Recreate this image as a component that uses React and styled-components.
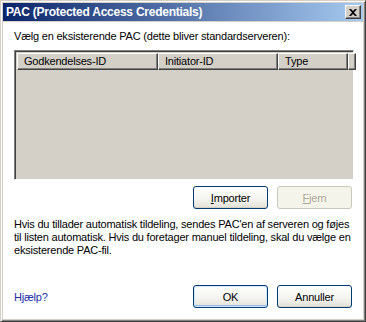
import React from "react";
import styled, { createGlobalStyle } from "styled-components";

const Global = createGlobalStyle`
  html, body { margin: 0; padding: 0; background: #fff; }
  body {
    font-family: Tahoma, "Liberation Sans", "DejaVu Sans", sans-serif;
    font-size: 11px;
    letter-spacing: -0.2px;
  }
`;

const Frame = styled.div`
  width: 366px;
  height: 322px;
  box-sizing: border-box;
  display: flex;
  flex-direction: column;
  background: #d4d0c8;
  border: 1px solid;
  border-color: #d4d0c8 #404040 #404040 #d4d0c8;
  box-shadow: inset 1px 1px #fff, inset -1px -1px #808080;
  padding: 2px;
`;

const TitleBar = styled.div`
  height: 18px;
  flex: none;
  display: flex;
  align-items: center;
  justify-content: space-between;
  padding: 0 2px 0 3px;
  background: linear-gradient(to right, #0a246a, #a6caf0);
  color: #fff;
  font-weight: bold;
  font-size: 12px;
  letter-spacing: -0.25px;
`;

const CloseBtn = styled.div`
  width: 16px;
  height: 14px;
  box-sizing: border-box;
  background: #d4d0c8;
  border: 1px solid;
  border-color: #fff #404040 #404040 #fff;
  box-shadow: inset -1px -1px #808080;
  display: flex;
  align-items: center;
  justify-content: center;
`;

const Body = styled.div`
  flex: 1;
  margin-top: 1px;
  background: #fff;
  padding: 8px 9px 0 11px;
  display: flex;
  flex-direction: column;
  color: #000;
`;

const Label = styled.div`
  line-height: 13px;
  height: 13px;
`;

const List = styled.div`
  margin-top: 7px;
  height: 130px;
  box-sizing: border-box;
  background: #d4d0c8;
  border: 1px solid;
  border-color: #808080 #fff #fff #808080;
  box-shadow: inset 1px 1px #404040;
  padding: 2px 0 0 2px;
`;

const Header = styled.div`
  display: flex;
  height: 17px;
`;

const HeadCell = styled.div`
  width: ${(p) => p.$w}px;
  box-sizing: border-box;
  flex: none;
  padding-left: 6px;
  line-height: 15px;
  background: #d4d0c8;
  border: 1px solid;
  border-color: #fff #404040 #404040 #fff;
  box-shadow: inset -1px -1px #808080;
  white-space: nowrap;
  overflow: hidden;
`;

const ButtonRow = styled.div`
  display: flex;
  justify-content: flex-end;
  gap: 9px;
  margin-top: 6px;
  padding-right: 2px;
`;

const Button = styled.button`
  width: 75px;
  height: 23px;
  box-sizing: border-box;
  font-family: inherit;
  font-size: 11px;
  letter-spacing: -0.2px;
  padding: 0;
  border-radius: 3px;
  border: 1px solid ${(p) => (p.disabled ? "#c9c7ba" : "#003c74")};
  color: ${(p) => (p.disabled ? "#aca899" : "#000")};
  background: ${(p) =>
    p.disabled
      ? "#f5f4ea"
      : "linear-gradient(to bottom, #fff 0%, #f3f3ef 60%, #e3e1d6 100%)"};
  box-shadow: ${(p) =>
    p.$default
      ? "inset 0 0 0 1px #cee7ff, inset 0 -1px 0 1px #98b8ea"
      : p.disabled
      ? "none"
      : "inset 0 -1px 0 #d6d0c5"};
  u { text-decoration: underline; }
`;

const Para = styled.p`
  margin: 9px 0 0;
  line-height: 13px;
  padding-right: 2px;
`;

const Footer = styled.div`
  margin-top: auto;
  margin-bottom: 11px;
  display: flex;
  align-items: center;
  justify-content: space-between;
  padding-right: 2px;
`;

const Help = styled.span`
  color: #1c2ea8;
  cursor: pointer;
`;

const Buttons = styled.div`
  display: flex;
  gap: 9px;
`;

export default function App() {
  return (
    <>
      <Global />
      <Frame>
        <TitleBar>
          <span>PAC (Protected Access Credentials)</span>
          <CloseBtn>
            <svg width="8" height="7" viewBox="0 0 8 7">
              <path d="M0 0h2l2 2 2-2h2L5 3.5 8 7H6L4 5 2 7H0l3-3.5z" fill="#000" />
            </svg>
          </CloseBtn>
        </TitleBar>
        <Body>
          <Label>Vælg en eksisterende PAC (dette bliver standardserveren):</Label>
          <List>
            <Header>
              <HeadCell $w={141}>Godkendelses-ID</HeadCell>
              <HeadCell $w={120}>Initiator-ID</HeadCell>
              <HeadCell $w={70}>Type</HeadCell>
              <HeadCell $w={5} />
            </Header>
          </List>
          <ButtonRow>
            <Button>
              <u>I</u>mporter
            </Button>
            <Button disabled>
              <u>F</u>jern
            </Button>
          </ButtonRow>
          <Para>
            Hvis du tillader automatisk tildeling, sendes PAC'en af serveren og føjes
            til listen automatisk. Hvis du foretager manuel tildeling, skal du vælge en
            eksisterende PAC-fil.
          </Para>
          <Footer>
            <Help>Hjælp?</Help>
            <Buttons>
              <Button $default>OK</Button>
              <Button>Annuller</Button>
            </Buttons>
          </Footer>
        </Body>
      </Frame>
    </>
  );
}
